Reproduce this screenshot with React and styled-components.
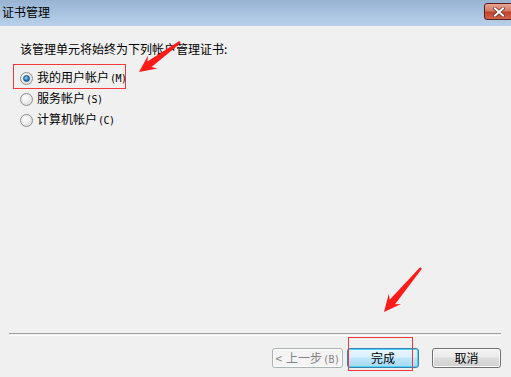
import styled, { createGlobalStyle } from "styled-components";

const GlobalStyle = createGlobalStyle`
  html, body {
    margin: 0;
    padding: 0;
    background: #f0f0f0;
  }
  body {
    font-family: "Noto Sans CJK SC", "Liberation Sans", sans-serif;
    font-size: 12px;
    color: #000;
  }
`;

const Window = styled.div`
  position: relative;
  width: 511px;
  height: 377px;
  display: flex;
  flex-direction: column;
  overflow: hidden;
  background: #f0f0f0;
`;

const TitleBar = styled.div`
  height: 26px;
  flex: none;
  display: flex;
  align-items: center;
  justify-content: space-between;
  padding-left: 2px;
  background: linear-gradient(#98b4d3, #b9d1ea);
  box-sizing: border-box;
`;

const Title = styled.span`
  font-size: 12px;
  line-height: 1;
  margin-top: -2px;
  color: #000;
`;

const CloseButton = styled.div`
  width: 30px;
  height: 17px;
  margin-top: -3px;
  margin-right: -3px;
  box-sizing: border-box;
  border: 1px solid #5a1c1c;
  border-radius: 3px;
  background: linear-gradient(#e8a593 0%, #d47a64 45%, #c2432b 55%, #d1654a 100%);
  display: flex;
  align-items: center;
  justify-content: center;
`;

const Body = styled.div`
  flex: 1;
  display: flex;
  flex-direction: column;
  padding: 16px 0 0 20px;
`;

const Prompt = styled.div`
  line-height: 14px;
  margin-bottom: 15px;
`;

const Options = styled.div`
  display: flex;
  flex-direction: column;
  gap: 7px;
`;

const OptionRow = styled.label`
  display: flex;
  align-items: center;
  gap: 4px;
  height: 14px;
  line-height: 14px;
`;

const Radio = styled.span`
  width: 11px;
  height: 11px;
  border-radius: 50%;
  border: 1px solid #8e8f8f;
  background: radial-gradient(circle at 40% 35%, #ffffff 0%, #e6e6e6 60%, #cfcfcf 100%);
  display: flex;
  align-items: center;
  justify-content: center;
  flex: none;

  &::after {
    content: "";
    display: ${(p) => (p.$checked ? "block" : "none")};
    width: 5px;
    height: 5px;
    border-radius: 50%;
    background: radial-gradient(circle at 40% 35%, #8fd4f7 0%, #1f7ec2 60%, #0b3e6c 100%);
    border: 1px solid #1a4d80;
  }
`;

const Mnemonic = styled.span`
  font-size: 10px;
  font-family: "DejaVu Sans Mono", "Liberation Mono", monospace;
  margin-left: 1px;
  letter-spacing: -0.5px;
`;

const Footer = styled.div`
  flex: none;
  display: flex;
  flex-direction: column;
  padding: 0 10px 9px 9px;
`;

const Separator = styled.div`
  height: 1px;
  border-top: 1px solid #a0a0a0;
  border-bottom: 1px solid #ffffff;
  margin-bottom: 12px;
`;

const ButtonRow = styled.div`
  display: flex;
  justify-content: flex-end;
  align-items: center;
`;

const Button = styled.button`
  height: 20px;
  width: ${(p) => p.$w || 68}px;
  margin-left: ${(p) => p.$gap || 0}px;
  box-sizing: border-box;
  padding: 0;
  font-family: "Noto Sans CJK SC", "Liberation Sans", sans-serif;
  font-size: 12px;
  line-height: 1;
  border-radius: 3px;
  border: 1px solid ${(p) => (p.$primary ? "#3c7fb1" : p.disabled ? "#adb2b5" : "#707070")};
  color: ${(p) => (p.disabled ? "#838383" : "#000")};
  background: ${(p) =>
    p.disabled
      ? "#f4f4f4"
      : p.$primary
      ? "linear-gradient(#e9f6fd 0%, #d9f0fc 45%, #bee6fd 50%, #a7d9f5 100%)"
      : "linear-gradient(#f2f2f2 0%, #ebebeb 45%, #dddddd 50%, #cfcfcf 100%)"};
  box-shadow: ${(p) => (p.$primary ? "inset 0 0 0 1px #48d8fb" : "inset 0 0 0 1px #fcfcfc")};
  display: flex;
  align-items: center;
  justify-content: center;
  gap: ${(p) => (p.disabled ? "4px" : "0")};
`;

const Overlay = styled.div`
  position: absolute;
  inset: 0;
  pointer-events: none;
`;

const RedBox = styled.div`
  position: absolute;
  left: ${(p) => p.$x}px;
  top: ${(p) => p.$y}px;
  width: ${(p) => p.$w}px;
  height: ${(p) => p.$h}px;
  border: 1px solid #f23a3a;
  box-sizing: border-box;
`;

const ArrowLayer = styled.svg`
  position: absolute;
  left: 0;
  top: 0;
`;

function arrowPoints(hx, hy, tx, ty) {
  const dx = tx - hx;
  const dy = ty - hy;
  const len = Math.hypot(dx, dy);
  const ux = dx / len;
  const uy = dy / len;
  const nx = -uy;
  const ny = ux;
  const at = (d, w) => [hx + ux * d + nx * w, hy + uy * d + ny * w];
  const pts = [
    [hx, hy],
    at(17, 8),
    at(13, 3.5),
    at(len, 1.2),
    at(len, -1.2),
    at(13, -3.5),
    at(17, -8),
  ];
  return pts.map((p) => p.map((v) => v.toFixed(1)).join(",")).join(" ");
}

const options = [
  { text: "我的用户帐户", key: "M", checked: true },
  { text: "服务帐户", key: "S" },
  { text: "计算机帐户", key: "C" },
];

export default function App() {
  return (
    <>
      <GlobalStyle />
      <Window>
        <TitleBar>
          <Title>证书管理</Title>
          <CloseButton>
            <svg width="12" height="10" viewBox="0 0 12 10">
              <path
                d="M2 1.5 L10 8.5 M10 1.5 L2 8.5"
                stroke="#5a2a2a"
                strokeWidth="3.4"
                strokeLinecap="square"
              />
              <path
                d="M2 1.5 L10 8.5 M10 1.5 L2 8.5"
                stroke="#ffffff"
                strokeWidth="2"
                strokeLinecap="square"
              />
            </svg>
          </CloseButton>
        </TitleBar>
        <Body>
          <Prompt>该管理单元将始终为下列帐户管理证书:</Prompt>
          <Options>
            {options.map((o) => (
              <OptionRow key={o.key}>
                <Radio $checked={o.checked} />
                <span>
                  {o.text}
                  <Mnemonic>({o.key})</Mnemonic>
                </span>
              </OptionRow>
            ))}
          </Options>
        </Body>
        <Footer>
          <Separator />
          <ButtonRow>
            <Button disabled $w={71}>
              <span>&lt;</span>
              <span>
                上一步<Mnemonic>(B)</Mnemonic>
              </span>
            </Button>
            <Button $primary $w={72} $gap={4}>
              完成
            </Button>
            <Button $w={69} $gap={13}>
              取消
            </Button>
          </ButtonRow>
        </Footer>
        <Overlay>
          <RedBox $x={13} $y={64} $w={113} $h={25} />
          <RedBox $x={348} $y={337} $w={65} $h={34} />
          <ArrowLayer width="511" height="377" viewBox="0 0 511 377">
            <polygon points={arrowPoints(139, 72, 180, 42)} fill="#ff1a1a" />
            <polygon points={arrowPoints(384, 312, 421, 268)} fill="#ff1a1a" />
          </ArrowLayer>
        </Overlay>
      </Window>
    </>
  );
}
